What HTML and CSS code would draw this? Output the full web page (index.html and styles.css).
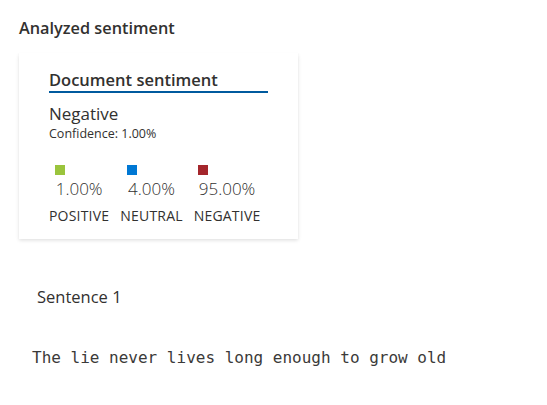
FILE: index.html
```html
<!DOCTYPE html>
<html>
<head>
<meta charset="utf-8">
<link rel="stylesheet" href="styles.css">
</head>
<body>
<div class="page">
  <h2 class="section-title">Analyzed sentiment</h2>
  <div class="card">
    <div class="card-title">Document sentiment</div>
    <div class="overall">Negative</div>
    <div class="confidence">Confidence: 1.00%</div>
    <div class="scores">
      <div class="score">
        <div class="score-top">
          <span class="swatch positive"></span>
          <span class="value">1.00%</span>
        </div>
        <span class="label">POSITIVE</span>
      </div>
      <div class="score">
        <div class="score-top">
          <span class="swatch neutral"></span>
          <span class="value">4.00%</span>
        </div>
        <span class="label">NEUTRAL</span>
      </div>
      <div class="score">
        <div class="score-top">
          <span class="swatch negative"></span>
          <span class="value">95.00%</span>
        </div>
        <span class="label">NEGATIVE</span>
      </div>
    </div>
  </div>
  <div class="sentence-head">Sentence 1</div>
  <pre class="sentence-text">The lie never lives long enough to grow old</pre>
</div>
</body>
</html>
```
FILE: styles.css
```css
html, body {
  margin: 0;
  padding: 0;
  background: #ffffff;
}
body {
  font-family: "Open Sans", "Noto Sans", sans-serif;
  color: #323130;
}
.page {
  padding: 17px 19px;
}
.section-title {
  margin: 0;
  font-size: 16.3px;
  font-weight: 600;
  line-height: 22px;
  color: #323130;
}
.card {
  margin-top: 14px;
  width: 279px;
  box-sizing: border-box;
  padding: 16px 30px 15px 30px;
  background: #fff;
  box-shadow: 0 1.6px 3.6px rgba(0,0,0,0.13), 0 0.3px 0.9px rgba(0,0,0,0.11);
}
.card-title {
  font-size: 16.5px;
  font-weight: 600;
  line-height: 22px;
  width: 219px;
  border-bottom: 2px solid #005a9e;
  padding-bottom: 0;
}
.overall {
  margin-top: 10px;
  font-size: 17px;
  line-height: 22px;
}
.confidence {
  font-size: 12.5px;
  line-height: 17px;
}
.scores {
  display: flex;
  gap: 11px;
  margin-top: 23px;
}
.score {
  display: flex;
  flex-direction: column;
  align-items: center;
}
.score-top {
  display: flex;
  flex-direction: column;
  align-items: flex-start;
}
.swatch {
  display: block;
  width: 10px;
  height: 10px;
  margin-left: -1px;
}
.swatch.positive { background: #9ac43c; }
.swatch.neutral { background: #0078d4; }
.swatch.negative { background: #a4262c; }
.value {
  margin-top: 3px;
  font-size: 17px;
  line-height: 22px;
  font-weight: 300;
}
.label {
  margin-top: 8px;
  font-size: 14px;
  line-height: 16px;
  letter-spacing: 0.2px;
}
.sentence-head {
  margin-top: 47px;
  padding-left: 18px;
  font-size: 16.5px;
  line-height: 22px;
}
.sentence-text {
  margin: 39px 0 0 13px;
  font-family: "DejaVu Sans Mono", monospace;
  font-size: 16px;
  line-height: 22px;
  color: #3b3a39;
}
```
